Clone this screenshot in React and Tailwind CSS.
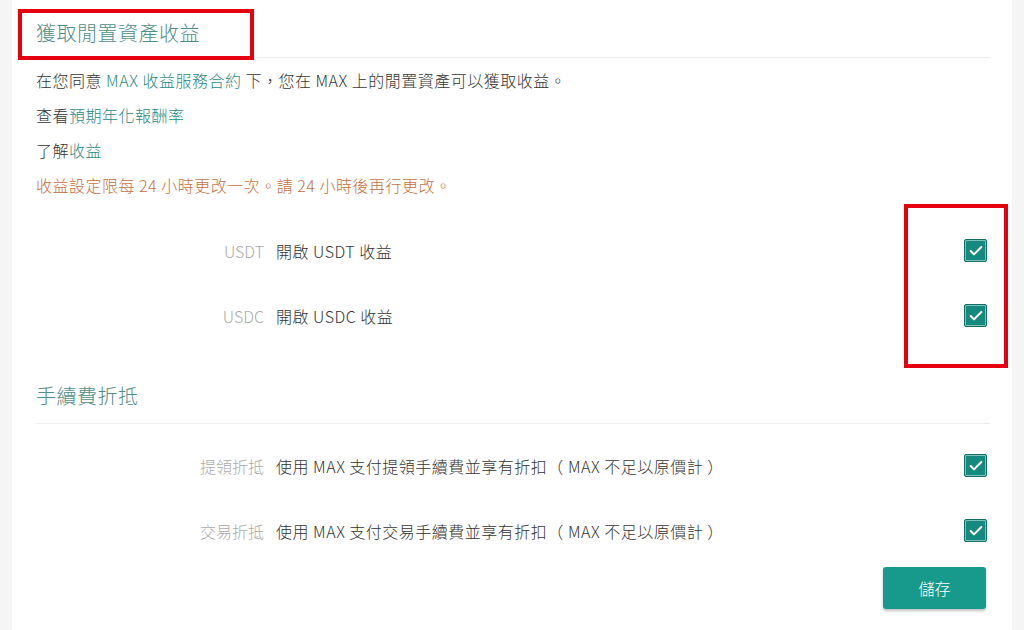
import { Check } from 'lucide-react'

const font = { fontFamily: '"Noto Sans CJK TC", "Noto Sans", sans-serif' }

function Box() {
  return (
    <span className="w-[23px] h-[23px] rounded-[2px] bg-[#16897e] border border-[#0f6f66] shadow-[inset_0_0_0_1px_#7cc4bc] flex items-center justify-center">
      <Check size={16} strokeWidth={3} className="text-white" />
    </span>
  )
}

function Row({ label, text }) {
  return (
    <div className="flex items-center h-[65px]">
      <div className="w-[228px] text-right text-[16px] text-[#aaaaaa]">{label}</div>
      <div className="ml-[12px] flex-1 text-[16px] text-[#333333] tracking-[0.5px]">{text}</div>
      <div className="mr-[3px]">
        <Box />
      </div>
    </div>
  )
}

export default function App() {
  return (
    <div className="min-h-[630px] bg-[#f5f5f5] flex font-light" style={font}>
      <div className="relative ml-[12px] w-[1000px] bg-white pl-[24px] pr-[22px] h-[630px]">
        <div className="h-[58px] border-b border-[#eeeeee] flex items-center pt-[8px]">
          <h1 className="text-[20px] text-[#4f8d87] tracking-[0.5px]">獲取閒置資產收益</h1>
        </div>
        <div className="text-[16px] text-[#333333] leading-[35px] pt-[5px] tracking-[0.5px]">
          <p>
            在您同意 <span className="text-[#2b8a7f]">MAX 收益服務合約</span> 下，您在 MAX 上的閒置資產可以獲取收益。
          </p>
          <p>
            查看<span className="text-[#2b8a7f]">預期年化報酬率</span>
          </p>
          <p>
            了解<span className="text-[#2b8a7f]">收益</span>
          </p>
          <p className="text-[#c6703e]">收益設定限每 24 小時更改一次。請 24 小時後再行更改。</p>
        </div>
        <div className="pt-[15px]">
          <Row label="USDT" text="開啟 USDT 收益" />
          <Row label="USDC" text="開啟 USDC 收益" />
        </div>
        <div className="mt-[20px] h-[56px] border-b border-[#eeeeee] flex items-center">
          <h2 className="text-[20px] text-[#4f8d87] tracking-[0.5px]">手續費折抵</h2>
        </div>
        <div className="pt-[9px]">
          <Row label="提領折抵" text="使用 MAX 支付提領手續費並享有折扣（ MAX 不足以原價計 ）" />
          <Row label="交易折抵" text="使用 MAX 支付交易手續費並享有折扣（ MAX 不足以原價計 ）" />
        </div>
        <div className="flex justify-end mt-[4px] pr-[4px]">
          <button className="w-[103px] h-[42px] rounded-[3px] bg-[#179a8b] text-white text-[16px] shadow-[0_2px_3px_rgba(0,0,0,0.25)]">
            儲存
          </button>
        </div>

        <div className="absolute left-[6px] top-[9px] w-[236px] h-[51px] border-[4px] border-[#e4000f]" />
        <div className="absolute left-[892px] top-[204px] w-[104px] h-[164px] border-[4px] border-[#e4000f]" />
      </div>
    </div>
  )
}
